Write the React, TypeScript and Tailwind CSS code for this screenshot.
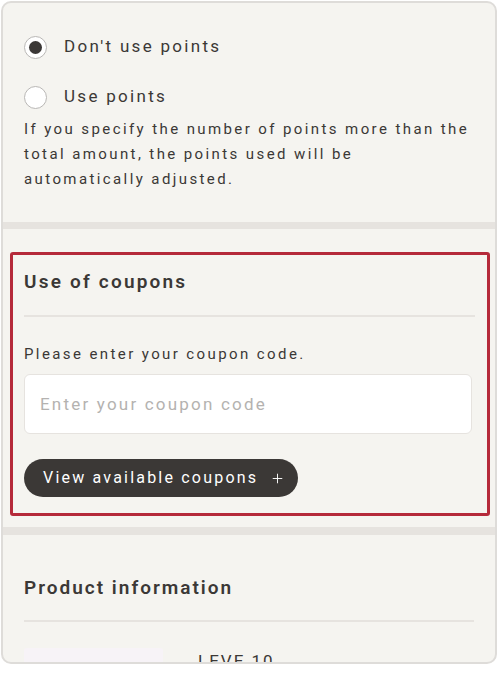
import { Plus } from "lucide-react"

function Radio({ checked, label }: { checked?: boolean; label: string }) {
  return (
    <label className="flex items-center gap-[17px] h-[24px]">
      <span className="flex items-center justify-center w-[23px] h-[23px] rounded-full bg-white border border-[#b9b7b5]">
        {checked && <span className="w-[13px] h-[13px] rounded-full bg-[#3b3836]" />}
      </span>
      <span className="text-[17px] tracking-[2.3px] text-[#3b3836]">{label}</span>
    </label>
  )
}

export default function App() {
  return (
    <div className="w-[498px] h-[680px] bg-white pt-[1px] pl-[1px]" style={{ fontFamily: "Roboto, 'Noto Sans', sans-serif" }}>
      <div className="w-[496px] h-[663px] rounded-[10px] border-2 border-[#dedcd9] bg-[#f5f4f0] overflow-hidden text-[#3b3836]">
        <section className="px-[21px] pt-[32px] h-[219px]">
          <div className="flex flex-col gap-[26px]">
            <Radio checked label="Don't use points" />
            <Radio label="Use points" />
          </div>
          <p className="mt-[8px] text-[15px] leading-[25px] tracking-[2.4px]">
            If you specify the number of points more than the total amount, the points used will be automatically adjusted.
          </p>
        </section>

        <div className="h-[7px] bg-[#e6e3df]" />

        <section className="pt-[23px] h-[298px]">
          <div className="ml-[7px] mr-[5px] h-[264px] border-[3px] border-[#b52a3a] rounded-[3px] pl-[11px] pr-[12px] pt-[14px]">
            <h2 className="text-[19px] font-semibold tracking-[2.2px] leading-[26px]">Use of coupons</h2>
            <div className="mt-[20px] h-[2px] bg-[#e6e3df]" />
            <p className="mt-[27px] text-[15px] tracking-[2.4px] leading-[20px]">Please enter your coupon code.</p>
            <input
              className="mt-[10px] w-[448px] h-[60px] rounded-[6px] border border-[#e6e3df] bg-white px-[15px] text-[17px] tracking-[2.2px] placeholder:text-[#b4b2b0] outline-none"
              placeholder="Enter your coupon code"
            />
            <button
              type="button"
              className="mt-[25px] flex items-center h-[38px] rounded-full bg-[#3b3836] pl-[19px] pr-[13px] text-white text-[16px] tracking-[2.2px]"
            >
              View available coupons
              <Plus size={15} strokeWidth={1.5} className="ml-[12px]" />
            </button>
          </div>
        </section>

        <div className="h-[8px] bg-[#e6e3df]" />

        <section className="px-[21px] pt-[40px]">
          <h2 className="text-[19px] font-semibold tracking-[2px] leading-[26px]">Product information</h2>
          <div className="mt-[19px] h-[2px] bg-[#e6e3df]" />
          <div className="mt-[26px] flex gap-[35px]">
            <div className="w-[139px] h-[120px] rounded-[3px] bg-[#f7f3f7]" />
            <p className="pt-[1px] text-[17px] tracking-[2px] leading-[24px]">LEVE 10</p>
          </div>
        </section>
      </div>
    </div>
  )
}
